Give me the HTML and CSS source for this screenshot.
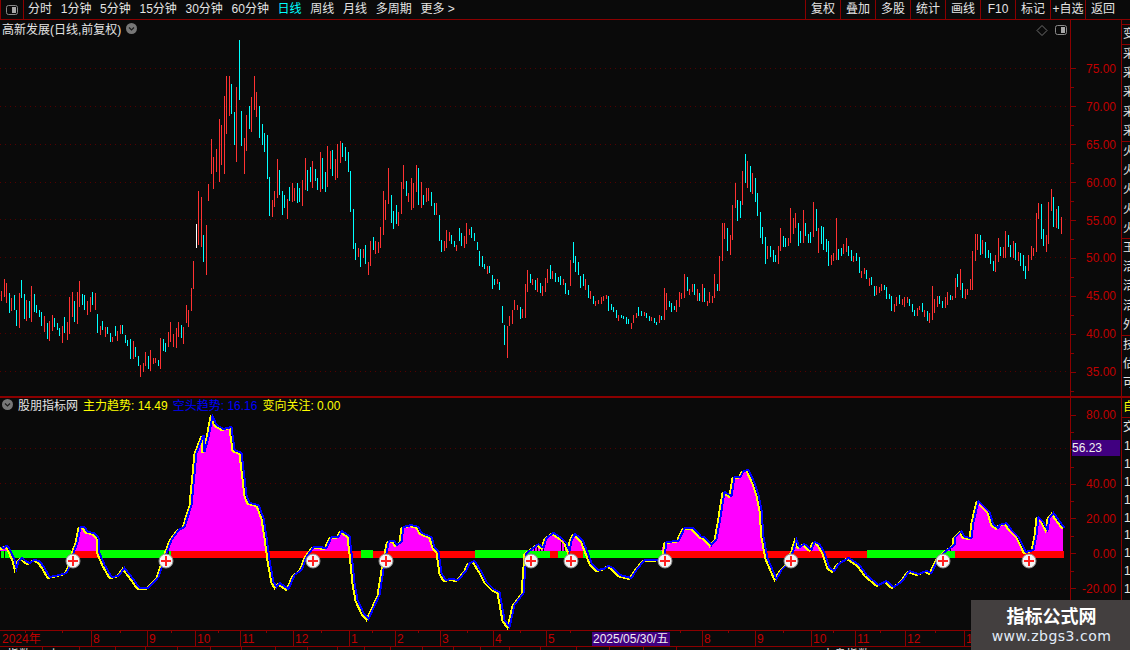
FILE: index.html
```html
<!DOCTYPE html>
<html lang="zh-CN">
<head>
<meta charset="utf-8">
<title>高新发展 日线</title>
<link rel="stylesheet" href="styles.css">
</head>
<body>
<div class="screen">
  <header class="toolbar">
    <div class="toolbar-icon">
      <svg width="12" height="10" viewBox="0 0 12 10"><rect x="0.5" y="0.5" width="11" height="9" rx="2" class="icon-frame"/><rect x="6" y="2" width="4" height="6" class="icon-fill"/></svg>
    </div>
    <nav class="periods">
      <span>分时</span><span>1分钟</span><span>5分钟</span><span>15分钟</span><span>30分钟</span><span>60分钟</span><span class="active">日线</span><span>周线</span><span>月线</span><span>多周期</span><span>更多 &gt;</span>
    </nav>
    <div class="actions">
      <span>复权</span><span>叠加</span><span>多股</span><span>统计</span><span>画线</span><span>F10</span><span>标记</span><span>+自选</span><span>返回</span>
    </div>
  </header>

  <div class="workspace">
    <div class="charts">
      <section class="pane pane-price">
        <svg class="chart" width="1121" height="376" viewBox="0 20 1121 376">
          <path class="grid" d="M0 68.5H1068M0 106.5H1068M0 144.5H1068M0 182.5H1068M0 219.5H1068M0 257.5H1068M0 295.5H1068M0 333.5H1068M0 371.5H1068"/>
          <path class="rule" d="M1070.5 20V396"/>
          <path class="rule" d="M1071 68.5H1076M1071 106.5H1076M1071 144.5H1076M1071 182.5H1076M1071 220.5H1076M1071 258.5H1076M1071 296.5H1076M1071 334.5H1076M1071 372.5H1076M1071 87.5H1074M1071 125.5H1074M1071 163.5H1074M1071 201.5H1074M1071 239.5H1074M1071 277.5H1074M1071 315.5H1074M1071 353.5H1074M1071 391.5H1074"/>
          <g class="axis-labels">
            <text x="1116" y="73">75.00</text><text x="1116" y="111">70.00</text><text x="1116" y="149">65.00</text><text x="1116" y="187">60.00</text><text x="1116" y="225">55.00</text><text x="1116" y="262">50.00</text><text x="1116" y="300">45.00</text><text x="1116" y="338">40.00</text><text x="1116" y="376">35.00</text>
          </g>
          <path class="bar-white" d="M196.5 224V248"/>
          <path class="bar-up" d="M1.5 291V301M4.5 279V297M6.5 283V303M11.5 298V311M19.5 293V328M26.5 300V321M31.5 286V322M44.5 316V332M49.5 321V341M52.5 315V331M62.5 326V343M67.5 322V340M69.5 297V334M72.5 292V317M77.5 292V324M79.5 281V307M87.5 301V315M90.5 297V312M95.5 293V310M100.5 326V335M105.5 327V337M112.5 337V342M117.5 331V341M120.5 325V334M133.5 341V359M140.5 365V377M143.5 363V372M145.5 352V366M150.5 350V371M153.5 358V364M155.5 358V363M160.5 338V369M168.5 332V347M170.5 322V342M173.5 334V347M176.5 328V348M178.5 322V337M183.5 327V344M186.5 305V323M188.5 310V327M191.5 288V311M193.5 261V289M198.5 191V245M201.5 197V247M206.5 225V275M208.5 184V201M211.5 139V174M213.5 157V189M216.5 149V172M219.5 119V182M221.5 125V165M224.5 96V174M226.5 76V134M229.5 76V116M236.5 87V162M244.5 138V174M246.5 115V151M251.5 97V132M254.5 76V110M256.5 92V117M272.5 200V217M274.5 191V207M277.5 159V198M287.5 199V219M292.5 183V202M294.5 188V201M302.5 180V206M305.5 158V190M312.5 161V188M320.5 152V192M327.5 146V187M330.5 151V169M335.5 159V180M337.5 144V178M340.5 141V163M358.5 248V257M363.5 249V258M368.5 262V275M370.5 241V266M375.5 241V254M378.5 242V253M380.5 227V248M383.5 191V235M385.5 200V220M388.5 168V204M398.5 212V226M401.5 182V214M403.5 165V189M408.5 193V202M411.5 178V210M413.5 183V208M416.5 165V192M421.5 182V208M426.5 188V202M428.5 188V201M436.5 203V215M444.5 241V251M446.5 230V248M449.5 232V241M456.5 245V251M464.5 236V248M466.5 223V244M469.5 229V235M487.5 266V274M497.5 279V284M507.5 326V358M509.5 316V326M512.5 310V324M514.5 300V310M517.5 305V310M522.5 309V318M525.5 284V318M527.5 270V292M532.5 279V285M537.5 278V292M542.5 286V296M545.5 278V292M547.5 269V283M552.5 271V279M563.5 279V285M570.5 260V286M585.5 279V290M590.5 291V299M595.5 301V306M598.5 300V304M601.5 297V304M603.5 296V301M606.5 295V299M618.5 315V321M631.5 323V329M633.5 315V323M636.5 313V318M644.5 312V316M651.5 317V321M659.5 315V323M664.5 288V320M666.5 293V310M676.5 300V312M679.5 292V307M681.5 293V299M684.5 274V298M689.5 289V295M692.5 284V292M697.5 289V301M702.5 284V302M707.5 301V306M709.5 292V303M712.5 296V303M714.5 274V298M719.5 256V291M722.5 223V261M724.5 223V239M730.5 235V255M732.5 205V240M735.5 183V208M742.5 171V205M747.5 161V188M752.5 173V194M767.5 246V259M778.5 246V264M780.5 228V251M788.5 238V246M790.5 208V243M793.5 218V234M795.5 213V228M803.5 210V243M813.5 202V237M818.5 228V253M831.5 255V265M833.5 253V261M836.5 218V260M843.5 244V254M846.5 238V252M853.5 256V262M861.5 271V278M864.5 268V274M869.5 278V286M876.5 286V295M879.5 287V293M881.5 284V291M894.5 304V312M896.5 297V306M902.5 299V305M904.5 297V307M907.5 297V303M917.5 308V316M919.5 306V310M924.5 310V317M929.5 313V323M932.5 286V320M934.5 299V313M937.5 296V307M945.5 297V308M947.5 292V305M952.5 296V300M955.5 278V298M960.5 269V290M965.5 289V299M967.5 289V295M970.5 279V290M972.5 251V290M975.5 234V261M977.5 234V250M982.5 240V254M995.5 255V272M998.5 238V262M1003.5 247V258M1005.5 231V258M1013.5 241V258M1018.5 252V261M1028.5 255V271M1031.5 246V260M1033.5 248V256M1036.5 213V252M1038.5 203V219M1046.5 235V252M1048.5 202V244M1051.5 189V211M1056.5 209V228M1061.5 217V234"/>
          <path class="bar-down" d="M9.5 293V313M14.5 295V310M16.5 310V326M21.5 280V298M24.5 294V319M29.5 301V318M34.5 294V312M36.5 305V313M39.5 310V317M41.5 312V326M47.5 323V339M54.5 318V327M57.5 323V330M59.5 328V336M64.5 317V333M74.5 301V322M82.5 294V305M84.5 295V310M92.5 292V305M97.5 314V333M102.5 321V330M107.5 327V334M110.5 333V342M115.5 326V336M122.5 325V334M125.5 335V343M127.5 340V346M130.5 339V359M135.5 347V357M138.5 356V366M148.5 356V369M158.5 360V366M163.5 339V351M165.5 343V352M181.5 325V338M203.5 235V262M231.5 84V114M234.5 112V145M239.5 40V100M241.5 111V146M249.5 106V129M259.5 106V138M262.5 124V145M264.5 133V152M267.5 135V179M269.5 177V216M279.5 170V195M282.5 191V215M284.5 195V208M289.5 187V201M297.5 183V203M299.5 188V202M307.5 170V191M310.5 167V182M315.5 169V181M317.5 178V190M322.5 158V189M325.5 172V192M332.5 150V176M342.5 143V157M345.5 147V161M348.5 152V172M350.5 171V212M353.5 209V249M355.5 243V260M360.5 249V267M365.5 245V264M373.5 237V250M391.5 195V223M393.5 211V229M396.5 205V224M406.5 181V196M418.5 168V205M423.5 195V205M431.5 192V206M434.5 203V215M439.5 215V241M441.5 240V252M451.5 235V244M454.5 241V247M459.5 228V241M461.5 233V246M471.5 227V238M474.5 233V241M477.5 242V250M479.5 251V266M482.5 256V267M484.5 264V269M489.5 266V273M492.5 275V289M494.5 279V285M499.5 282V290M502.5 306V323M504.5 325V345M520.5 307V319M530.5 274V283M535.5 280V290M540.5 283V293M550.5 265V279M555.5 273V282M558.5 277V282M560.5 276V285M565.5 283V294M568.5 290V295M573.5 242V263M575.5 256V272M578.5 262V275M580.5 276V288M583.5 274V286M588.5 285V298M593.5 296V304M608.5 296V311M611.5 304V310M613.5 307V312M616.5 310V318M621.5 315V318M623.5 316V319M626.5 317V324M628.5 319V324M638.5 307V316M641.5 311V316M646.5 313V318M649.5 316V321M654.5 318V323M656.5 322V325M661.5 316V320M669.5 301V307M671.5 303V312M674.5 306V310M687.5 277V291M694.5 284V295M699.5 293V301M704.5 288V302M717.5 284V291M727.5 228V251M737.5 200V221M740.5 201V218M745.5 154V183M750.5 166V192M755.5 178V202M757.5 193V216M760.5 212V238M762.5 227V244M765.5 237V264M770.5 246V257M773.5 250V262M775.5 255V262M783.5 236V247M785.5 238V247M798.5 223V246M800.5 231V243M805.5 223V236M808.5 234V243M810.5 232V243M816.5 209V231M821.5 226V244M823.5 227V250M826.5 239V252M828.5 241V266M838.5 249V260M841.5 248V256M848.5 246V256M851.5 250V261M856.5 253V261M859.5 257V273M866.5 270V279M871.5 277V285M874.5 286V296M884.5 285V290M886.5 287V299M889.5 294V299M891.5 296V311M899.5 295V304M909.5 299V306M912.5 304V312M914.5 310V316M922.5 303V312M927.5 311V321M939.5 296V304M942.5 301V308M950.5 295V300M957.5 274V287M962.5 283V298M980.5 235V255M985.5 242V258M988.5 250V258M990.5 253V264M993.5 261V271M1000.5 247V256M1008.5 235V247M1010.5 245V257M1015.5 243V260M1020.5 253V266M1023.5 255V271M1025.5 266V279M1041.5 204V239M1043.5 229V246M1053.5 197V227M1058.5 206V229"/>
          <path class="glyph-line" d="M1042 25.5L1047 30.5L1042 35.5L1037 30.5Z"/>
          <rect x="1055.5" y="25.5" width="11" height="9" rx="2" class="icon-frame"/>
          <rect x="1061" y="27" width="4" height="6" class="icon-fill"/>
        </svg>
        <div class="pane-title">
          <span class="title-text">高新发展(日线,前复权)</span>
          <svg class="round-btn" width="11" height="11" viewBox="0 0 11 11"><circle cx="5.5" cy="5.5" r="5.5" class="btn-disc"/><path d="M3 4.5L5.5 7L8 4.5" class="btn-chev"/></svg>
        </div>
      </section>

      <section class="pane pane-indicator">
        <svg class="chart" width="1121" height="232" viewBox="0 398 1121 232">
          <defs>
            <clipPath id="above-zero"><rect x="0" y="398" width="1070" height="153"/></clipPath>
            <path id="trend" d="M0 547L2 548L5 546L7 547L10 553L13 560L15 568L17 561L21 558L24 561L28 563L33 560L38 561L43 568L48 577L58 575L65 573L68 567L72 553L76 542L79 527L83 527L86 532L93 533L97 538L98 553L103 565L110 577L117 576L123 568L130 577L138 588L147 588L157 577L165 553L170 540L177 530L183 527L190 505L195 453L202 435L203 452L207 437L211 416L215 425L222 429L230 427L233 450L240 453L245 495L248 503L257 505L262 518L265 537L268 560L272 582L275 587L278 583L287 589L293 575L300 570L305 557L312 547L317 547L325 548L330 537L337 537L340 531L348 536L350 553L353 583L356 600L362 613L367 619L372 608L378 595L383 563L387 543L388 541L393 541L395 545L400 542L402 527L410 525L417 527L420 533L430 537L433 547L437 552L440 573L444 580L450 579L457 580L465 570L468 563L473 561L480 572L485 582L493 590L498 592L503 620L508 627L513 605L522 593L525 553L532 548L537 544L542 548L545 538L552 533L560 538L565 543L568 551L570 541L573 534L578 537L582 542L585 550L590 563L596 570L602 569L607 566L612 568L618 575L630 578L635 570L643 560L655 560L663 557L665 542L677 541L683 528L692 528L700 537L703 537L710 545L715 539L718 523L723 492L730 496L733 477L739 477L742 471L747 470L753 483L757 495L760 510L762 537L766 558L775 579L780 570L787 563L792 550L795 540L798 547L803 544L810 550L813 542L818 544L823 553L828 568L833 571L837 564L847 558L858 565L865 575L877 585L885 581L892 587L900 582L908 571L917 574L925 571L930 573L937 558L943 552L953 545L954 537L960 531L963 537L970 538L972 522L977 501L983 507L988 512L992 525L997 528L998 525L1005 523L1010 530L1017 537L1022 547L1024 552L1032 550L1035 535L1037 517L1042 522L1046 530L1048 518L1052 513L1057 520L1063 528"/>
            <g id="plus-mark">
              <circle r="7" class="mark-disc"/>
              <path d="M-5 0H5M0 -5V5" class="mark-cross"/>
            </g>
          </defs>
          <path class="grid" d="M0 448.5H1068M0 483.5H1068M0 518.5H1068M0 588.5H1068"/>
          <path class="rule" d="M1070.5 398V630"/>
          <path class="rule" d="M1071 415.5H1076M1071 449.5H1076M1071 484.5H1076M1071 518.5H1076M1071 553.5H1076M1071 588.5H1076M1071 432.5H1074M1071 467.5H1074M1071 501.5H1074M1071 536.5H1074M1071 571.5H1074M1071 605.5H1074"/>
          <g class="axis-labels">
            <text x="1116" y="419">80.00</text><text x="1116" y="488">40.00</text><text x="1116" y="523">20.00</text><text x="1116" y="558">0.00</text><text x="1116" y="593">-20.00</text>
          </g>
          <rect x="1072" y="440" width="48" height="16" class="price-tag"/>
          <text x="1072" y="452" class="price-tag-text">56.23</text>
          <path class="band-green" d="M1 554H4M5 554H71M99 554H167M169 554H171M361 554H373M475 554H550M558 554H567M583 554H665M867 554H955"/>
          <path class="band-red" d="M73 554.5H99M171 554.5H361M373 554.5H475M550 554.5H558M567 554.5H583M665 554.5H867M955 554.5H1064"/>
          <g clip-path="url(#above-zero)">
            <path class="area" d="M0 551L0 547L2 548L5 546L7 547L10 553L13 560L15 568L72 553L76 542L79 527L83 527L86 532L93 533L97 538L98 553L165 553L170 540L177 530L183 527L190 505L195 453L202 435L203 452L207 437L211 416L215 425L222 429L230 427L233 450L240 453L245 495L248 503L257 505L262 518L265 537L268 560L305 557L312 547L317 547L325 548L330 537L337 537L340 531L348 536L350 553L383 563L387 543L388 541L393 541L395 545L400 542L402 527L410 525L417 527L420 533L430 537L433 547L437 552L522 593L525 553L532 548L537 544L542 548L545 538L552 533L560 538L565 543L568 551L570 541L573 534L578 537L582 542L585 550L590 563L660 553L665 542L677 541L683 528L692 528L700 537L703 537L710 545L715 539L718 523L723 492L730 496L733 477L739 477L742 471L747 470L753 483L757 495L760 510L762 537L766 558L787 563L792 550L795 540L798 547L803 544L810 550L813 542L818 544L823 553L930 573L937 558L943 552L953 545L954 537L960 531L963 537L970 538L972 522L977 501L983 507L988 512L992 525L997 528L998 525L1005 523L1010 530L1017 537L1022 547L1024 552L1032 550L1035 535L1037 517L1042 522L1046 530L1048 518L1052 513L1057 520L1063 528L1063 551Z"/>
            <path class="area-gap" d="M534.5 542V551M537.5 540V551M540.5 542V551M543.5 542V551M561.5 535V551M564.5 540V551M947.5 540V551M950.5 540V551"/>
          </g>
          <use href="#trend" class="line-yellow" x="-0.5" y="1"/>
          <use href="#trend" class="line-blue" x="1.5"/>
          <use href="#plus-mark" x="73" y="561"/>
          <use href="#plus-mark" x="166" y="561"/>
          <use href="#plus-mark" x="313" y="561"/>
          <use href="#plus-mark" x="386" y="561"/>
          <use href="#plus-mark" x="531" y="561"/>
          <use href="#plus-mark" x="571" y="561"/>
          <use href="#plus-mark" x="665" y="561"/>
          <use href="#plus-mark" x="791" y="561"/>
          <use href="#plus-mark" x="943" y="561"/>
          <use href="#plus-mark" x="1029" y="561"/>
        </svg>
        <div class="pane-title pane-title-ind">
          <svg class="round-btn" width="11" height="11" viewBox="0 0 11 11"><circle cx="5.5" cy="5.5" r="5.5" class="btn-disc"/><path d="M3 4.5L5.5 7L8 4.5" class="btn-chev"/></svg>
          <span class="title-text">股朋指标网</span>
          <span class="val-yellow">主力趋势: 14.49</span>
          <span class="val-blue">空头趋势: 16.16</span>
          <span class="val-yellow">变向关注: 0.00</span>
        </div>
      </section>

      <div class="date-axis">
        <svg class="chart" width="1121" height="20" viewBox="0 630 1121 20">
          <path class="rule" d="M0 630.5H1121M0 646.5H1121"/>
          <path class="rule" d="M91.5 631V646M147.5 631V646M195.5 631V646M240.5 631V646M293.5 631V646M349.5 631V646M395.5 631V646M440.5 631V646M493.5 631V646M546.5 631V646M702.5 631V646M755.5 631V646M811.5 631V646M855.5 631V646M905.5 631V646M964.5 631V646"/>
          <path class="rule" d="M25.5 631V633M62.5 631V633M120.5 631V633M171.5 631V633M218.5 631V633M266.5 631V633M321.5 631V633M372.5 631V633M418.5 631V633M467.5 631V633M520.5 631V633M570.5 631V633M680.5 631V633M728.5 631V633M783.5 631V633M833.5 631V633M880.5 631V633M935.5 631V633M1000.5 631V633M1040.5 631V633"/>
          <path class="rule" d="M42.5 647V650M79.5 647V650M115.5 647V650M145.5 647V650M177.5 647V650M210.5 647V650M241.5 647V650M275.5 647V650M307.5 647V650M337.5 647V650M364.5 647V650M390.5 647V650M422.5 647V650M453.5 647V650M480.5 647V650M509.5 647V650M540.5 647V650M576.5 647V650M609.5 647V650M643.5 647V650M676.5 647V650"/>
          <g class="date-labels">
            <text x="2" y="643">2024年</text><text x="93" y="643">8</text><text x="149" y="643">9</text><text x="197" y="643">10</text><text x="242" y="643">11</text><text x="295" y="643">12</text><text x="351" y="643">1</text><text x="397" y="643">2</text><text x="442" y="643">3</text><text x="495" y="643">4</text><text x="548" y="643">5</text><text x="704" y="643">8</text><text x="757" y="643">9</text><text x="813" y="643">10</text><text x="857" y="643">11</text><text x="907" y="643">12</text><text x="966" y="643">1</text>
          </g>
          <rect x="592" y="632" width="78" height="14" class="date-tag"/>
          <text x="593" y="643" class="date-tag-text">2025/05/30/五</text>
          <text x="7" y="659" class="clip-text">指数</text>
          <text x="48" y="659" class="clip-text">上</text>
          <text x="822" y="659" class="clip-text">大盘指数</text>
        </svg>
      </div>
    </div>

    <aside class="side">
      <div class="side-upper">
        <div class="side-spacer"></div>
        <div class="side-group"><span>变</span></div>
        <div class="side-group"><span>采</span><span>采</span><span>采</span><span>采</span><span>采</span></div>
        <div class="side-group"><span>火</span><span>火</span><span>火</span><span>火</span><span>火</span></div>
        <div class="side-group"><span>王</span><span>活</span><span>活</span><span>活</span><span>外</span></div>
        <div class="side-group side-last"><span>技</span><span>估</span><span>可</span></div>
      </div>
      <div class="side-lower">
        <div class="side-auto">自</div>
        <div class="side-vol">交</div>
        <div class="side-list"><span>1</span><span>1</span><span>1</span><span>1</span><span>1</span><span>1</span><span>1</span><span>1</span><span>1</span><span>1</span></div>
      </div>
    </aside>
  </div>

  <div class="watermark">
    <strong>指标公式网</strong>
    <span>www.zbgs3.com</span>
  </div>
</div>
</body>
</html>
```

FILE: styles.css
```css
* { box-sizing: border-box; }
html, body { margin: 0; padding: 0; background: #0a0a0a; }
body { font-family: "Liberation Sans", "Noto Sans CJK SC", sans-serif; font-size: 12px; color: #e4e4e4; }

.screen { position: relative; width: 1130px; height: 650px; overflow: hidden; background: #0a0a0a; display: flex; flex-direction: column; }

/* toolbar */
.toolbar { display: flex; align-items: stretch; height: 20px; flex: none; border-bottom: 1px solid #8b0000; line-height: 18px; }
.toolbar-icon { width: 24px; display: flex; align-items: center; justify-content: center; border-right: 1px solid #8b0000; border-left: 1px solid #8b0000; }
.periods { display: flex; gap: 8.7px; padding-left: 4px; flex: 1; white-space: nowrap; }
.periods .active { color: #00ffff; }
.actions { display: flex; margin-right: 10px; }
.actions span { width: 35px; border-left: 1px solid #8b0000; text-align: center; white-space: nowrap; }

.icon-frame { fill: none; stroke: #8a8a8a; stroke-width: 1; }
.icon-fill { fill: #a8a8a8; }

/* layout */
.workspace { display: flex; flex: 1; min-height: 0; }
.charts { width: 1122px; flex: none; border-right: 1px solid #8b0000; display: flex; flex-direction: column; }
.chart { display: block; }

.pane { position: relative; flex: none; }
.pane-price { height: 378px; border-bottom: 2px solid #8b0000; }
.pane-indicator { height: 232px; }
.date-axis { height: 20px; flex: none; }

.pane-title { position: absolute; left: 2px; top: 0; display: flex; align-items: center; gap: 5px; height: 17px; white-space: nowrap; }
.pane-title-ind { top: -2px; gap: 0; }
.pane-title-ind .title-text { margin: 0 0 0 5px; }
.pane-title-ind span + span { margin-left: 5px; }
.title-text { color: #e4e4e4; }
.val-yellow { color: #ffff00; }
.val-blue { color: #0000ff; }
.round-btn { display: block; flex: none; }
.btn-disc { fill: #777777; }
.btn-chev { fill: none; stroke: #1c1c1c; stroke-width: 1.2; }

/* chart strokes */
.grid { fill: none; stroke: #550000; stroke-width: 1; stroke-dasharray: 1 4; shape-rendering: crispEdges; }
.rule { fill: none; stroke: #8b0000; stroke-width: 1; shape-rendering: crispEdges; }
.bar-up { fill: none; stroke: #ff3232; stroke-width: 1; shape-rendering: crispEdges; }
.bar-down { fill: none; stroke: #00ffff; stroke-width: 1; shape-rendering: crispEdges; }
.bar-white { fill: none; stroke: #ffffff; stroke-width: 1; shape-rendering: crispEdges; }
.glyph-line { fill: none; stroke: #6e6e6e; stroke-width: 1; }

.axis-labels text { fill: #c00000; font-size: 12px; text-anchor: end; }
.price-tag { fill: #400080; }
.price-tag-text { fill: #f0f0f0; font-size: 12px; }

.band-green { fill: none; stroke: #00ff00; stroke-width: 8; shape-rendering: crispEdges; }
.band-red { fill: none; stroke: #ff0000; stroke-width: 7; shape-rendering: crispEdges; }
.area { fill: #ff00ff; shape-rendering: crispEdges; }
.area-gap { fill: none; stroke: #0a0a0a; stroke-width: 1; shape-rendering: crispEdges; }
.line-yellow { fill: none; stroke: #ffff00; stroke-width: 2; shape-rendering: crispEdges; }
.line-blue { fill: none; stroke: #0000ff; stroke-width: 2; shape-rendering: crispEdges; }
.mark-disc { fill: #f4f4f4; stroke: #8c8c8c; stroke-width: 1; }
.mark-cross { fill: none; stroke: #ff2020; stroke-width: 2; }

.date-labels text { fill: #c00000; font-size: 12px; }
.date-tag { fill: #400080; }
.date-tag-text { fill: #f0f0f0; font-size: 12px; }
.clip-text { fill: #e4e4e4; font-size: 12px; }

/* clipped right-hand list */
.side { width: 8px; flex: none; overflow: hidden; display: flex; flex-direction: column; }
.side-upper { height: 378px; flex: none; border-bottom: 2px solid #8b0000; }
.side-spacer { height: 5px; border-bottom: 1px solid #8b0000; }
.side-group { border-bottom: 1px solid #8b0000; height: 97px; display: flex; flex-direction: column; }
.side-group:nth-child(2) { height: 20px; }
.side-group span { display: block; height: 19.2px; line-height: 19px; flex: none; width: 14px; margin-left: 1px; }
.side-last { border-bottom: 0; height: 60px; }
.side-lower { flex: 1; }
.side-auto { height: 20px; line-height: 19px; color: #ffff00; padding-left: 1px; border-bottom: 1px solid #8b0000; white-space: nowrap; }
.side-vol { height: 19px; line-height: 18px; padding-left: 1px; white-space: nowrap; }
.side-list { display: flex; flex-direction: column; }
.side-list span { height: 17.9px; line-height: 18px; margin-left: 2px; }

/* watermark */
.watermark { position: absolute; left: 971px; top: 600px; width: 159px; height: 50px; background: #433f3f; display: flex; flex-direction: column; align-items: center; padding-top: 3px; padding-left: 2px; color: #ffffff; }
.watermark strong { font-family: "Noto Sans CJK SC", sans-serif; font-size: 18px; line-height: 24px; font-weight: 700; }
.watermark span { font-family: "DejaVu Sans", sans-serif; font-size: 14px; line-height: 18px; color: #e2ecf8; white-space: nowrap; letter-spacing: 0.5px; }
```
